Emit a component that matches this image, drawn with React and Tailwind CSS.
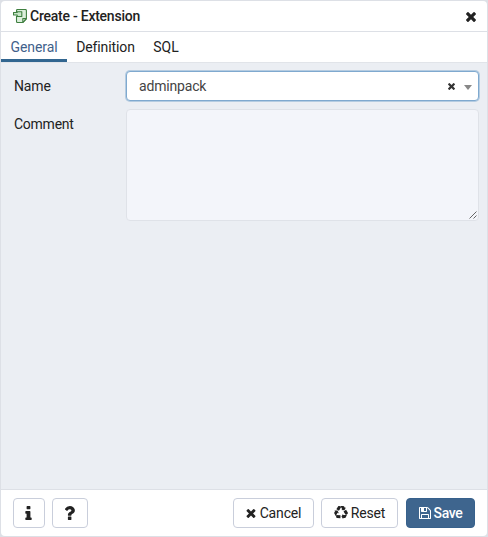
function CloseIcon({ className }) {
  return (
    <svg viewBox="302 366 1188 1188" className={className} fill="currentColor" aria-hidden="true">
      <path d="M1490 1322q0 40-28 68l-136 136q-28 28-68 28t-68-28l-294-294-294 294q-28 28-68 28t-68-28l-136-136q-28-28-28-68t28-68l294-294-294-294q-28-28-28-68t28-68l136-136q28-28 68-28t68 28l294 294 294-294q28-28 68-28t68 28l136 136q28 28 28 68t-28 68l-294 294 294 294q28 28 28 68z" />
    </svg>
  );
}

function InfoIcon({ className }) {
  return (
    <svg viewBox="576 128 640 1408" className={className} fill="currentColor" aria-hidden="true">
      <path d="M1216 1344v128q0 26-19 45t-45 19h-512q-26 0-45-19t-19-45v-128q0-26 19-45t45-19h64v-384h-64q-26 0-45-19t-19-45v-128q0-26 19-45t45-19h384q26 0 45 19t19 45v576h64q26 0 45 19t19 45zm-128-1152v192q0 26-19 45t-45 19h-256q-26 0-45-19t-19-45v-192q0-26 19-45t45-19h256q26 0 45 19t19 45z" />
    </svg>
  );
}

function QuestionIcon({ className }) {
  return (
    <svg viewBox="515 256 889 1280" className={className} fill="currentColor" aria-hidden="true">
      <path d="M1088 1256v240q0 16-12 28t-28 12h-240q-16 0-28-12t-12-28v-240q0-16 12-28t28-12h240q16 0 28 12t12 28zm316-600q0 54-15.5 101t-35 76.5-55 59.5-57.5 43.5-61 35.5q-41 23-68.5 65t-27.5 67q0 17-12 32.5t-28 15.5h-240q-15 0-25.5-18.5t-10.5-37.5v-45q0-83 65-156.5t143-108.5q59-27 84-56t25-76q0-42-46.5-74t-107.5-32q-65 0-108 29-35 25-107 115-13 16-31 16-12 0-25-8l-164-125q-13-10-15.5-25t5.5-28q160-266 464-266 80 0 161 31t146 83 106 127.5 41 158.5z" />
    </svg>
  );
}

function RecycleIcon({ className }) {
  return (
    <svg viewBox="0 0 1792 1792" className={className} fill="currentColor" aria-hidden="true">
      <path d="M836 1169l-15 368-2 22-420-29q-36-3-67-31.5t-47-65.5q-11-27-14.5-55t4-65 12-55 21.5-64 19-53q78 12 509 28zm-387-586l180 379-147-92q-63 72-111.5 144.5t-72.5 125-39.5 94.5-18.5 63l-4 21-190-357q-17-26-18-56t6-47l8-18q35-63 114-188l-140-86zm1231 517l-188 359q-12 29-36.5 46.5t-43.5 20.5l-18 4q-71 7-219 12l8 164-230-367 211-362 7 173q170 16 283 5t170-33zm-785-924q-47 63-265 435l-317-187-19-12 225-356q20-31 60-45t80-10q24 2 48.5 12t42 21 41.5 33 36 34.5 36 39.5 32 35zm655 307l212 363q18 37 12.5 76t-27.5 74q-13 20-33 37t-38 28-48.5 22-47 16-51.5 14-46 12q-34-72-265-436l313-195zm-143-226l142-83-220 373-419-20 151-86q-34-89-75-166t-75.5-123.5-64.5-80-47-46.5l-17-13 405 1q31-3 58 10.5t39 28.5l11 15q39 61 112 190z" />
    </svg>
  );
}

function SaveIcon({ className }) {
  return (
    <svg viewBox="0 128 1536 1536" className={className} fill="currentColor" aria-hidden="true">
      <path d="M384 1536h768v-384h-768v384zM1280 1536h128v-896q0-14-10-38.5t-20-34.5l-281-281q-10-10-34-20t-39-10v416q0 40-28 68t-68 28h-576q-40 0-68-28t-28-68v-416h-128v1280h128v-416q0-40 28-68t68-28h832q40 0 68 28t28 68v416zM896 608v-320q0-13-9.5-22.5t-22.5-9.5h-192q-13 0-22.5 9.5t-9.5 22.5v320q0 13 9.5 22.5t22.5 9.5h192q13 0 22.5-9.5t9.5-22.5zM1536 640v928q0 40-28 68t-68 28h-1344q-40 0-68-28t-28-68v-1344q0-40 28-68t68-28h928q40 0 88 20t76 48l280 280q28 28 48 76t20 88z" />
    </svg>
  );
}

function ExtensionIcon() {
  return (
    <svg viewBox="0 0 14 15" className="mt-px h-[15px] w-[14px]" fill="none" stroke="#3f7f40" strokeWidth="1.1" strokeLinejoin="round" aria-hidden="true">
      <path d="M3.5 3V1.5q0-1 1-1h7.9q1 0 1 1v8.3l-3.6 3.7H4.5q-1 0-1-1V7" fill="#dcefdc" />
      <path d="M13.3 9.6H9.8v3.8z" fill="#fff" />
      <path d="M.5 3.5h3.7V2.7h4.6v4.8H4.2V6H.5z" fill="#c9e6c9" />
    </svg>
  );
}

const button = "flex h-[30px] items-center justify-center rounded-[4px] border border-[#c9cedb] bg-white";

export default function App() {
  return (
    <div className="h-[537px] w-[488px] bg-[#dde0e6] p-px font-[Roboto,sans-serif] text-[14px] leading-5 text-[#222]">
      <div className="flex h-full flex-col overflow-hidden rounded-[4px] bg-white">
        <header className="flex h-[31px] shrink-0 items-center border-b border-[#dde0e6] pr-[11px] pl-3">
          <ExtensionIcon />
          <h1 className="ml-[3px] flex-1 font-medium tracking-[-0.24px]">Create - Extension</h1>
          <CloseIcon className="mt-px h-[10px] w-[10px] text-[#222]" />
        </header>

        <nav className="flex h-[30px] shrink-0">
          <div className="w-[66px] border-b-[3px] border-[#326690] pt-[5px] text-center tracking-[-0.1px] text-[#41618b]">General</div>
          <div className="w-[77px] pt-[5px] text-center tracking-[-0.1px]">Definition</div>
          <div className="w-[44px] pt-[5px] text-center">SQL</div>
        </nav>

        <main className="flex-1 border-t border-[#e1e4e9] bg-[#ebeef3] pt-[8px] pr-[8px] pl-[13px]">
          <div className="flex">
            <label className="w-[112px] pt-[5px] tracking-[-0.15px]">Name</label>
            <div className="flex h-[30px] flex-1 items-center rounded-[4px] border border-[#7fa9cf] bg-white pr-[6px] pl-3 shadow-[0_0_0_1px_#b5cce1]">
              <span className="flex-1 tracking-[-0.18px] text-[#444]">adminpack</span>
              <CloseIcon className="h-[7px] w-[7px] text-[#333]" />
              <svg viewBox="0 0 8 5" className="mt-[2px] ml-[9px] h-[5px] w-[8px]" fill="#888" aria-hidden="true">
                <path d="M0 0h8L4 5z" />
              </svg>
            </div>
          </div>
          <div className="mt-[8px] flex">
            <label className="w-[112px] pt-[5px] tracking-[-0.25px]">Comment</label>
            <div className="flex h-[112px] flex-1 items-end justify-end rounded-[4px] border border-[#dfe2e8] bg-[#f3f5fa] p-px">
              <svg viewBox="0 0 8 8" className="h-2 w-2" stroke="#666" strokeWidth="1" aria-hidden="true">
                <path d="M.5 7.5l7-7M4.5 7.5l3-3" />
              </svg>
            </div>
          </div>
        </main>

        <footer className="flex h-[47px] shrink-0 items-center border-t border-[#dde0e6] pr-3 pl-3">
          <button className={button + " w-8 pr-px"}>
            <InfoIcon className="h-[14px] w-[7px]" />
          </button>
          <button className={button + " ml-[7px] w-[36px]"}>
            <QuestionIcon className="h-[14px] w-[10px]" />
          </button>
          <div className="flex-1" />
          <button className={button + " w-[81px] gap-1"}>
            <CloseIcon className="h-[9px] w-[10px]" />
            <span className="tracking-[-0.15px]">Cancel</span>
          </button>
          <button className={button + " ml-[7px] w-[77px] gap-[3px]"}>
            <RecycleIcon className="h-[14px] w-[14px]" />
            <span className="tracking-[-0.15px]">Reset</span>
          </button>
          <button className="ml-[8px] flex h-[30px] w-[69px] items-center justify-center gap-[3px] rounded-[4px] border border-[#37618c] bg-[#3e658e] font-medium text-white">
            <SaveIcon className="h-3 w-3" />
            <span className="tracking-[-0.35px]">Save</span>
          </button>
        </footer>
      </div>
    </div>
  );
}
